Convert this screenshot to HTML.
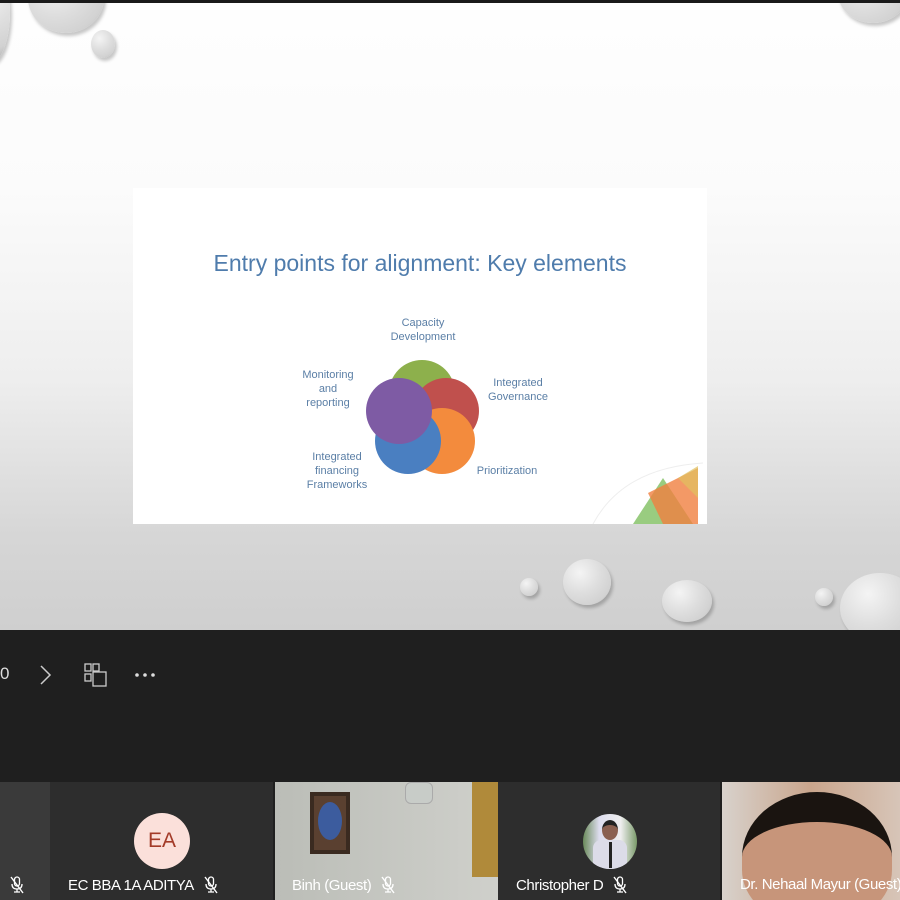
<!DOCTYPE html>
<html><head><meta charset="utf-8"><style>
*{margin:0;padding:0;box-sizing:border-box}
body{width:900px;height:900px;overflow:hidden;background:#1f1f1f;font-family:"Liberation Sans",sans-serif;position:relative}
.top{position:absolute;left:0;top:0;width:900px;height:3px;background:#1a1a1a}
.stage{position:absolute;left:0;top:3px;width:900px;height:627px;background:linear-gradient(#fefefe 0%,#fbfbfb 30%,#eeeeee 60%,#d6d6d6 85%,#cfcfcf 100%);overflow:hidden}
.drop{position:absolute;border-radius:50%;background:radial-gradient(circle at 35% 30%,#f4f4f4 0%,#dedede 45%,#d2d2d2 75%,#aaa 100%);box-shadow:2px 3px 3px rgba(0,0,0,.22)}
.slide{position:absolute;left:133px;top:185px;width:574px;height:336px;background:#fff}
.t{position:absolute;color:#5b7fa6;font-size:11px;text-align:center;line-height:14px}
.title{position:absolute;left:0;width:574px;top:62px;text-align:center;color:#4f7cac;font-size:23px}
.c{position:absolute;border-radius:50%;width:66px;height:66px}
.tb{position:absolute;top:630px;left:0;width:900px;height:152px;background:#1f1f1f}
.tile{position:absolute;top:782px;height:118px;overflow:hidden}
.name{position:absolute;top:94px;color:#fff;font-size:15px;white-space:nowrap;font-family:"Liberation Sans Narrow","Liberation Sans",sans-serif;letter-spacing:-0.4px;display:flex;align-items:center;gap:10px}
.mic{display:inline-block}
</style></head><body>
<svg width="0" height="0" style="position:absolute"><defs><symbol id="m" viewBox="0 0 14 18"><rect x="4.5" y="1" width="5" height="9" rx="2.5" fill="none" stroke="#fff" stroke-width="1.3"/><path d="M2 8 Q2 13 7 13 Q12 13 12 8 M7 13 V16 M4 16 H10" fill="none" stroke="#fff" stroke-width="1.3"/><path d="M1 1 L13 17" stroke="#fff" stroke-width="1.4"/></symbol></defs></svg>
<div class="top"></div>
<div class="stage">
<div class="drop" style="left:-30px;top:-40px;width:40px;height:100px"></div>
<div class="drop" style="left:28px;top:-40px;width:76px;height:70px"></div>
<div class="drop" style="left:91px;top:27px;width:24px;height:28px"></div>
<div class="drop" style="left:838px;top:-40px;width:70px;height:60px"></div>
<div class="drop" style="left:520px;top:575px;width:18px;height:18px"></div>
<div class="drop" style="left:563px;top:556px;width:48px;height:46px"></div>
<div class="drop" style="left:662px;top:577px;width:50px;height:42px"></div>
<div class="drop" style="left:815px;top:585px;width:18px;height:18px"></div>
<div class="drop" style="left:840px;top:570px;width:80px;height:70px"></div>
<div class="slide">
<div class="title">Entry points for alignment: Key elements</div>
<div class="t" style="left:250px;top:128px;width:80px">Capacity<br>Development</div>
<div class="t" style="left:345px;top:188px;width:80px">Integrated<br>Governance</div>
<div class="t" style="left:155px;top:180px;width:80px">Monitoring<br>and<br>reporting</div>
<div class="t" style="left:164px;top:262px;width:80px">Integrated<br>financing<br>Frameworks</div>
<div class="t" style="left:334px;top:276px;width:80px">Prioritization</div>
<div class="c" style="left:256px;top:172px;background:#8db04c"></div>
<div class="c" style="left:280px;top:190px;background:#c0504d"></div>
<div class="c" style="left:276px;top:220px;background:#f38b3d"></div>
<div class="c" style="left:242px;top:220px;background:#4a7fc1"></div>
<div class="c" style="left:233px;top:190px;background:#7e5ba4"></div>
<svg style="position:absolute;left:450px;top:270px" width="124" height="66"><path d="M10 66 Q40 10 120 5" fill="none" stroke="#eee"/><polygon points="50,66 80,20 110,66" fill="#7fbf60" opacity=".8"/><polygon points="65,35 115,10 115,66 80,66" fill="#f08040" opacity=".8"/><polygon points="95,20 115,8 115,40" fill="#e0c060" opacity=".7"/></svg>
</div>
</div>
<div class="tb">
<div style="position:absolute;left:0;top:34px;color:#ddd;font-size:17px">0</div>
<svg style="position:absolute;left:38px;top:34px" width="16" height="22"><path d="M3 2 L12 11 L3 20" fill="none" stroke="#ccc" stroke-width="1.5"/></svg>
<svg style="position:absolute;left:84px;top:33px" width="24" height="24"><rect x="1" y="1" width="6" height="7" fill="none" stroke="#ccc" stroke-width="1.3"/><rect x="1" y="11" width="6" height="7" fill="none" stroke="#ccc" stroke-width="1.3"/><rect x="9" y="1" width="6" height="7" fill="none" stroke="#ccc" stroke-width="1.3"/><rect x="9" y="9" width="13" height="14" fill="#1f1f1f" stroke="#ccc" stroke-width="1.3"/></svg>
<svg style="position:absolute;left:134px;top:42px" width="24" height="6"><circle cx="3" cy="3" r="1.8" fill="#ddd"/><circle cx="11" cy="3" r="1.8" fill="#ddd"/><circle cx="19" cy="3" r="1.8" fill="#ddd"/></svg>
</div>
<div class="tile" style="left:0;width:50px;background:#3a3a3a"><div class="name" style="left:10px"><svg class="mic" width="14" height="18"><use href="#m"/></svg></div></div>
<div class="tile" style="left:50px;width:223px;background:#2d2d2d">
<div style="position:absolute;left:84px;top:31px;width:56px;height:56px;border-radius:50%;background:#fbe0da;color:#a33b28;font-size:21px;text-align:center;line-height:56px">EA</div>
<div class="name" style="left:18px">EC BBA 1A ADITYA <svg class="mic" width="14" height="18"><use href="#m"/></svg></div></div>
<div class="tile" style="left:275px;width:223px;background:linear-gradient(90deg,#bbbdb7,#cfd0cb)">
<div style="position:absolute;left:35px;top:10px;width:40px;height:62px;background:#5a4030;border:4px solid #3a2a20"><div style="margin:6px 4px;height:38px;border-radius:50%;background:#3c5c9e"></div></div>
<div style="position:absolute;left:130px;top:0;width:28px;height:22px;background:#c8ccc8;border:1px solid #aaa;border-radius:6px"></div>
<div style="position:absolute;left:197px;top:0;width:26px;height:95px;background:#b08a3a"></div>
<div class="name" style="left:17px">Binh (Guest) <svg class="mic" width="14" height="18"><use href="#m"/></svg></div></div>
<div class="tile" style="left:498px;width:222px;background:#2d2d2d">
<div style="position:absolute;left:85px;top:32px;width:54px;height:55px;border-radius:50%;overflow:hidden;background:linear-gradient(90deg,#6a8a5a,#dde 30%,#eee 70%,#7a9a6a)"><div style="position:absolute;left:19px;top:6px;width:16px;height:20px;border-radius:50%;background:#8a6050;border-top:5px solid #222"></div><div style="position:absolute;left:10px;top:26px;width:34px;height:30px;background:#dcdce8;border-radius:8px 8px 0 0"></div><div style="position:absolute;left:26px;top:28px;width:3px;height:26px;background:#222"></div></div>
<div class="name" style="left:18px">Christopher D <svg class="mic" width="14" height="18"><use href="#m"/></svg></div></div>
<div class="tile" style="left:722px;width:178px;background:linear-gradient(90deg,#d8d2cc,#c9a58c 50%,#d7c5b8)">
<div style="position:absolute;left:20px;top:10px;width:150px;height:130px;border-radius:50% 50% 40% 40%;background:#c7957a;border-top:30px solid #1a1410"></div>
<div class="name" style="left:18px">Dr. Nehaal Mayur (Guest)</div></div>
</body></html>
